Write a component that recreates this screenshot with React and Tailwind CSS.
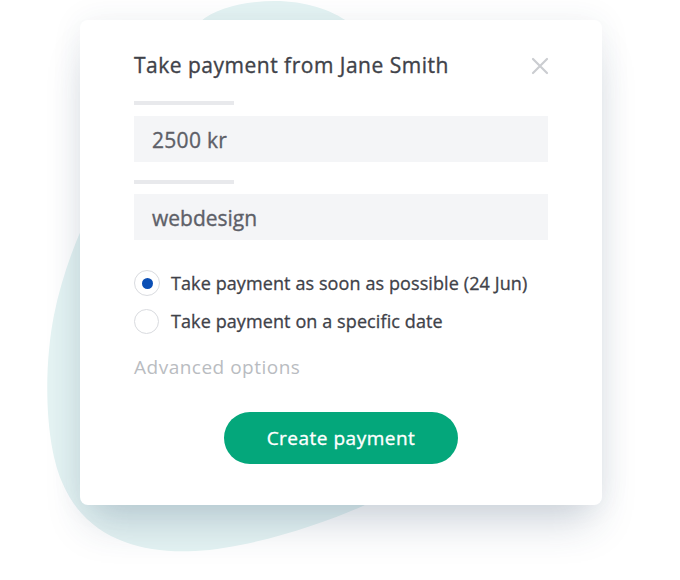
import React from "react";

function Radio({ checked, size = 26 }) {
  return (
    <span
      className="flex shrink-0 items-center justify-center rounded-full border-[1.5px] border-[#d9dbdf] bg-white"
      style={{ width: size, height: size }}
    >
      {checked && <span className="block h-[11px] w-[11px] rounded-full bg-[#0b4fb5]" />}
    </span>
  );
}

export default function App() {
  const font = { fontFamily: "'Open Sans', 'Noto Sans', sans-serif" };
  return (
    <div className="relative h-[580px] w-[680px] overflow-hidden bg-white" style={font}>
      <svg className="absolute left-0 top-0" width="680" height="580" viewBox="0 0 680 580">
        <path
          d="M200 22 C215 8 245 1 275 1 C305 1 332 10 348 22 L430 120 L430 470 L363 506 C320 525 250 548 195 551 C140 554 85 538 62 482 C44 440 44 365 54 315 C60 285 70 255 82 228 L140 80 Z"
          fill="#e4f3f3"
        />
      </svg>
      <div className="relative ml-[80px] mt-[20px] flex h-[485px] w-[522px] flex-col rounded-[8px] bg-white px-[54px] pt-[32px] shadow-[0_26px_40px_-10px_rgba(40,70,100,0.22),0_0_32px_rgba(40,70,100,0.07)]">
        <div className="flex h-[28px] items-center justify-between">
          <h1 className="text-[21px] font-normal tracking-[0.5px] text-[#3f4249] [-webkit-text-stroke:0.35px_#3f4249]">Take payment from Jane Smith</h1>
          <svg width="18" height="18" viewBox="0 0 18 18" className="mr-[-1px]">
            <path d="M2 2 L16 16 M16 2 L2 16" stroke="#cbcdd1" strokeWidth="2.2" strokeLinecap="round" />
          </svg>
        </div>
        <div className="mt-[21px] h-[4px] w-[100px] bg-[#e8e9ec]" />
        <div className="mt-[11px] flex h-[46px] items-center bg-[#f4f5f7] px-[18px] pt-[4px] text-[21px] tracking-[0.3px] text-[#5d6068] [-webkit-text-stroke:0.35px_#5d6068]">
          2500 kr
        </div>
        <div className="mt-[18px] h-[4px] w-[100px] bg-[#e8e9ec]" />
        <div className="mt-[10px] flex h-[46px] items-center bg-[#f4f5f7] px-[18px] pt-[4px] text-[21px] text-[#5d6068] [-webkit-text-stroke:0.35px_#5d6068]">
          webdesign
        </div>
        <div className="mt-[30px] flex h-[26px] items-center gap-[11px]">
          <Radio checked size={26} />
          <span className="text-[18px] tracking-[0.1px] text-[#3f4249] [-webkit-text-stroke:0.3px_#3f4249]">Take payment as soon as possible (24 Jun)</span>
        </div>
        <div className="mt-[12px] flex h-[26px] items-center gap-[12px]">
          <Radio size={25} />
          <span className="text-[18px] tracking-[0.1px] text-[#3f4249] [-webkit-text-stroke:0.3px_#3f4249]">Take payment on a specific date</span>
        </div>
        <div className="mt-[21px] h-[24px] text-[19px] leading-[24px] tracking-[0.5px] text-[#b9bcc1]">Advanced options</div>
        <div className="mt-[33px] flex justify-center">
          <button className="h-[52px] w-[234px] rounded-full bg-[#04a77b] text-[19px] tracking-[0.5px] text-white [-webkit-text-stroke:0.35px_#ffffff]">
            Create payment
          </button>
        </div>
      </div>
    </div>
  );
}
